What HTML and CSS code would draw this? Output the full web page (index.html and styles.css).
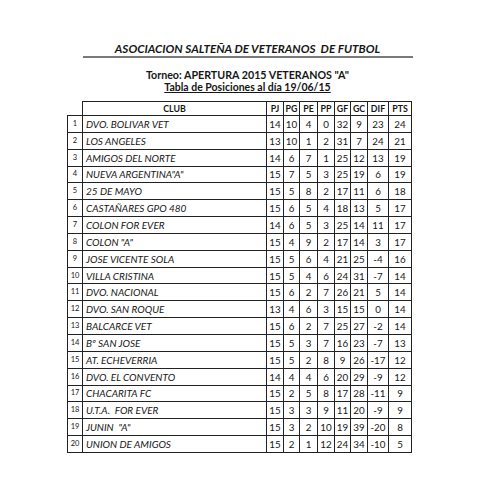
FILE: index.html
```html
<!DOCTYPE html>
<html lang="es">
<head>
<meta charset="utf-8">
<title>Tabla de Posiciones</title>
<link rel="stylesheet" href="styles.css">
</head>
<body>
<div class="page">
  <h1 class="title">ASOCIACION SALTEÑA DE VETERANOS&nbsp; DE FUTBOL</h1>
  <h2 class="torneo">Torneo: APERTURA 2015 VETERANOS "A"</h2>
  <h3 class="fecha">Tabla de Posiciones al día 19/06/15</h3>
  <table class="tabla">
    <colgroup>
      <col class="c-n"><col class="c-club"><col class="c-17"><col class="c-16"><col class="c-18"><col class="c-17"><col class="c-16"><col class="c-17"><col class="c-dif"><col class="c-pts">
    </colgroup>
    <thead>
      <tr><th class="blank"></th><th>CLUB</th><th>PJ</th><th>PG</th><th>PE</th><th>PP</th><th>GF</th><th>GC</th><th>DIF</th><th>PTS</th></tr>
    </thead>
    <tbody>
      <tr><td class="n">1</td><td class="club">DVO. BOLIVAR VET</td><td>14</td><td>10</td><td>4</td><td>0</td><td>32</td><td>9</td><td>23</td><td>24</td></tr>
      <tr><td class="n">2</td><td class="club">LOS ANGELES</td><td>13</td><td>10</td><td>1</td><td>2</td><td>31</td><td>7</td><td>24</td><td>21</td></tr>
      <tr><td class="n">3</td><td class="club">AMIGOS DEL NORTE</td><td>14</td><td>6</td><td>7</td><td>1</td><td>25</td><td>12</td><td>13</td><td>19</td></tr>
      <tr><td class="n">4</td><td class="club">NUEVA ARGENTINA"A"</td><td>15</td><td>7</td><td>5</td><td>3</td><td>25</td><td>19</td><td>6</td><td>19</td></tr>
      <tr><td class="n">5</td><td class="club">25 DE MAYO</td><td>15</td><td>5</td><td>8</td><td>2</td><td>17</td><td>11</td><td>6</td><td>18</td></tr>
      <tr><td class="n">6</td><td class="club">CASTAÑARES GPO 480</td><td>15</td><td>6</td><td>5</td><td>4</td><td>18</td><td>13</td><td>5</td><td>17</td></tr>
      <tr><td class="n">7</td><td class="club">COLON FOR EVER</td><td>14</td><td>6</td><td>5</td><td>3</td><td>25</td><td>14</td><td>11</td><td>17</td></tr>
      <tr><td class="n">8</td><td class="club">COLON "A"</td><td>15</td><td>4</td><td>9</td><td>2</td><td>17</td><td>14</td><td>3</td><td>17</td></tr>
      <tr><td class="n">9</td><td class="club">JOSE VICENTE SOLA</td><td>15</td><td>5</td><td>6</td><td>4</td><td>21</td><td>25</td><td>-4</td><td>16</td></tr>
      <tr><td class="n">10</td><td class="club">VILLA CRISTINA</td><td>15</td><td>5</td><td>4</td><td>6</td><td>24</td><td>31</td><td>-7</td><td>14</td></tr>
      <tr><td class="n">11</td><td class="club">DVO. NACIONAL</td><td>15</td><td>6</td><td>2</td><td>7</td><td>26</td><td>21</td><td>5</td><td>14</td></tr>
      <tr><td class="n">12</td><td class="club">DVO. SAN ROQUE</td><td>13</td><td>4</td><td>6</td><td>3</td><td>15</td><td>15</td><td>0</td><td>14</td></tr>
      <tr><td class="n">13</td><td class="club">BALCARCE VET</td><td>15</td><td>6</td><td>2</td><td>7</td><td>25</td><td>27</td><td>-2</td><td>14</td></tr>
      <tr><td class="n">14</td><td class="club">Bº SAN JOSE</td><td>15</td><td>5</td><td>3</td><td>7</td><td>16</td><td>23</td><td>-7</td><td>13</td></tr>
      <tr><td class="n">15</td><td class="club">AT. ECHEVERRIA</td><td>15</td><td>5</td><td>2</td><td>8</td><td>9</td><td>26</td><td>-17</td><td>12</td></tr>
      <tr><td class="n">16</td><td class="club">DVO. EL CONVENTO</td><td>14</td><td>4</td><td>4</td><td>6</td><td>20</td><td>29</td><td>-9</td><td>12</td></tr>
      <tr><td class="n">17</td><td class="club">CHACARITA FC</td><td>15</td><td>2</td><td>5</td><td>8</td><td>17</td><td>28</td><td>-11</td><td>9</td></tr>
      <tr><td class="n">18</td><td class="club">U.T.A.&nbsp; FOR EVER</td><td>15</td><td>3</td><td>3</td><td>9</td><td>11</td><td>20</td><td>-9</td><td>9</td></tr>
      <tr><td class="n">19</td><td class="club">JUNIN&nbsp; "A"</td><td>15</td><td>3</td><td>2</td><td>10</td><td>19</td><td>39</td><td>-20</td><td>8</td></tr>
      <tr><td class="n">20</td><td class="club">UNION DE AMIGOS</td><td>15</td><td>2</td><td>1</td><td>12</td><td>24</td><td>34</td><td>-10</td><td>5</td></tr>
    </tbody>
  </table>
</div>
</body>
</html>
```
FILE: styles.css
```css
html, body {
  margin: 0;
  padding: 0;
  background: #fff;
}
body {
  font-family: Lato, "Open Sans", "Liberation Sans", sans-serif;
  color: #161616;
}
.page {
  width: 495px;
  height: 495px;
  display: flex;
  flex-direction: column;
  align-items: center;
  padding-top: 42px;
  box-sizing: border-box;
}
.title {
  margin: 0;
  width: 330px;
  text-align: center;
  font-size: 11.7px;
  line-height: 13px;
  font-weight: 700;
  font-style: italic;
  border-bottom: 2px solid #7a7a7a;
  padding-bottom: 1px;
}
.torneo {
  margin: 10px 0 0 0;
  font-size: 10.7px;
  line-height: 13px;
  font-weight: 700;
}
.fecha {
  margin: 0;
  font-size: 10.5px;
  line-height: 12px;
  font-weight: 700;
  text-decoration: underline;
  text-underline-offset: 1px;
}
.tabla {
  align-self: flex-start;
  margin: 8px 0 0 67px;
  border-collapse: collapse;
  table-layout: fixed;
  width: 344px;
  font-size: 9.8px;
}
.c-n { width: 15px; }
.c-club { width: 184px; }
.c-17 { width: 17px; }
.c-16 { width: 16px; }
.c-18 { width: 18px; }
.c-dif { width: 21px; }
.c-pts { width: 23px; }
.tabla th, .tabla td {
  border: 1px solid #222;
  padding: 0;
  height: 15.85px;
  line-height: 12px;
  text-align: center;
  white-space: nowrap;
  overflow: hidden;
}
.tabla th {
  font-weight: 700;
  font-size: 8.8px;
  height: 13px;
}
.tabla th.blank {
  border-top: none;
  border-left: none;
}
.tabla td.n {
  font-size: 7.5px;
}
.tabla td.club {
  text-align: left;
  padding-left: 3px;
  font-style: italic;
  font-size: 10px;
}
```
